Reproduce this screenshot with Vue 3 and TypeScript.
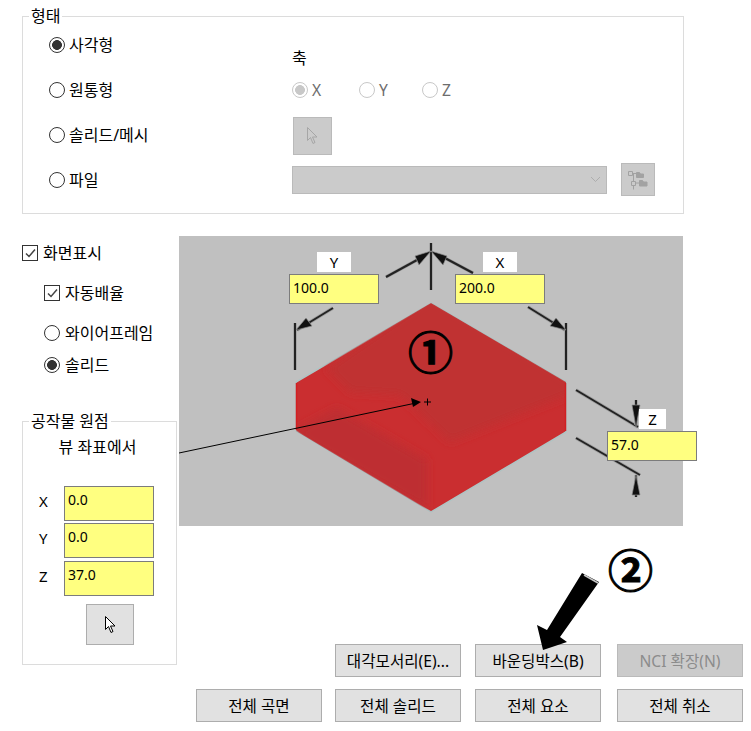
<script setup lang="ts">
const shapes = [
  { label: "원통형", row: 2 },
  { label: "솔리드/메시", row: 3 },
  { label: "파일", row: 4 },
];
const axes = [
  { label: "X", checked: true },
  { label: "Y", checked: false },
  { label: "Z", checked: false },
];
const origin = [
  { label: "X", value: "0.0" },
  { label: "Y", value: "0.0" },
  { label: "Z", value: "37.0" },
];
// 치수선: [x1, y1, x2, y2]
const dimLines = [
  [295, 323, 295, 370],
  [297, 330, 333, 308],
  [386, 277, 417, 260],
  [431, 243, 431, 290],
  [443, 257, 473, 273],
  [528, 307, 565, 330],
  [566, 323, 566, 370],
  [576, 390, 638, 427],
  [576, 438, 640, 475],
  [636, 400, 636, 425],
  [636, 475, 636, 497],
];
const dimHeads = [
  "296,330 306,318 312,326",
  "431,251 415,256 419,265",
  "431,251 447,256 443,265",
  "566,330 556,318 550,326",
  "636,427 632,405 640,405",
  "636,475 632,495 640,495",
];
</script>

<template>
  <div class="page">
    <section class="group shape_group">
      <span class="legend">형태</span>
      <div class="shape_grid">
        <label class="option" style="grid-area: 1 / 1">
          <input class="radio" type="radio" name="shape" checked />사각형
        </label>
        <div class="axis_title">축</div>
        <label v-for="s in shapes" :key="s.label" class="option" :style="{ gridArea: s.row + ' / 1' }">
          <input class="radio" type="radio" name="shape" />{{ s.label }}
        </label>
        <div class="axes">
          <label v-for="a in axes" :key="a.label" class="option disabled">
            <input class="radio" type="radio" name="axis" :checked="a.checked" disabled />{{ a.label }}
          </label>
        </div>
        <div class="pick_cell">
          <button class="off_btn pick" disabled>
            <svg width="11" height="17" viewBox="0 0 11 17">
              <path d="M.5.5v13l3-3 2.5 6 2-1-2.5-5.500h4.500z" fill="#cbcbcb" stroke="#a6a6a6" />
            </svg>
          </button>
        </div>
        <div class="file_cell">
          <div class="select">
            <svg width="11" height="7" viewBox="0 0 11 7">
              <path d="M1 1l4.500 4.500L10 1" fill="none" stroke="#adadad" />
            </svg>
          </div>
          <button class="off_btn tree" disabled>
            <svg width="20" height="20" viewBox="0 0 20 20" fill="none" stroke="#a2a2a2">
              <path d="M.5 1.500h4v4h-4zM4.500 3.500h3.500M5.500 3.500v16M7.500 13h3.500" />
              <path d="M3.500 11.500h4v4h-4z" fill="#cbcbcb" />
              <path d="M8.500 2.500h3l1 1.500h3v3.500h-7zM11.500 10.500h3l1 1.500h3.500v4h-7.500z" fill="#a2a2a2" />
            </svg>
          </button>
        </div>
      </div>
    </section>

    <div class="middle">
      <aside class="left">
        <label class="option display">
          <span class="check"><svg width="13" height="13" viewBox="0 0 13 13"><path d="M2 6.500l3 3 6-7" fill="none" stroke="#444" stroke-width="1.500" /></svg></span>화면표시
        </label>
        <label class="option auto">
          <span class="check"><svg width="13" height="13" viewBox="0 0 13 13"><path d="M2 6.500l3 3 6-7" fill="none" stroke="#444" stroke-width="1.500" /></svg></span>자동배율
        </label>
        <label class="option wire">
          <input class="radio" type="radio" name="view" />와이어프레임
        </label>
        <label class="option solid">
          <input class="radio" type="radio" name="view" checked />솔리드
        </label>

        <section class="group origin_group">
          <span class="legend">공작물 원점</span>
          <div class="origin_title">뷰 좌표에서</div>
          <div class="origin_rows">
            <div v-for="o in origin" :key="o.label" class="origin_row">
              <span class="origin_label">{{ o.label }}</span>
              <input class="num origin_num" :value="o.value" readonly />
            </div>
          </div>
          <button class="btn origin_pick">
            <svg width="11" height="17" viewBox="0 0 11 17">
              <path d="M.5.5v13l3-3 2.5 6 2-1-2.5-5.500h4.500z" fill="#fff" stroke="#000" />
            </svg>
          </button>
        </section>
      </aside>

      <div class="right">
        <div class="viewport">
          <svg class="scene" width="504" height="290" viewBox="179 236 504 290">
            <defs>
              <clipPath id="box">
                <polygon points="431,303 566,382 566,432 431,512 296,431 296,382" />
              </clipPath>
              <filter id="soft">
                <feGaussianBlur stdDeviation="4" />
              </filter>
            </defs>
            <polygon points="431,303 566,382 566,432 431,512 296,431 296,382" fill="#ca2e30" stroke="#afc4c4" stroke-width="1.500" />
            <g clip-path="url(#box)">
              <polygon points="431,296 574,382 574,393 450,442 400,395 350,392 326,368" fill="#c03032" filter="url(#soft)" />
              <polygon points="290,433 337,408 427,460 427,510" fill="#be2f31" filter="url(#soft)" />
            </g>
            <path d="M296.500 383v47M565.500 383v48" stroke="#d21f22" stroke-width="1.500" />
            <g v-for="(l, i) in dimLines" :key="i">
              <line :x1="l[0]" :y1="l[1]" :x2="l[2]" :y2="l[3]" stroke="#a0a0a0" stroke-width="3.500" />
              <line :x1="l[0]" :y1="l[1]" :x2="l[2]" :y2="l[3]" stroke="#222" stroke-width="2" />
            </g>
            <polygon v-for="(h, i) in dimHeads" :key="i" :points="h" fill="#111" stroke="#8e8e8e" stroke-width=".7" />
            <line x1="179" y1="453" x2="416" y2="403" stroke="#000" />
            <polygon points="421,402 411,398 413,407" fill="#000" />
            <path d="M424 402h7M427.500 398.500v7" stroke="#000" />
          </svg>
          <span class="dim_label y_label">Y</span>
          <span class="dim_label x_label">X</span>
          <span class="dim_label z_label">Z</span>
          <input class="num dim_num y_num" value="100.0" readonly />
          <input class="num dim_num x_num" value="200.0" readonly />
          <input class="num dim_num z_num" value="57.0" readonly />
          <span class="mark mark_one">①</span>
        </div>

        <div class="buttons">
          <button class="btn" style="grid-column: 2">대각모서리(E)...</button>
          <button class="btn">바운딩박스(B)</button>
          <button class="btn off" disabled>NCI 확장(N)</button>
          <button class="btn">전체 곡면</button>
          <button class="btn">전체 솔리드</button>
          <button class="btn">전체 요소</button>
          <button class="btn">전체 취소</button>

          <span class="mark mark_two">②</span>
          <svg class="big_arrow" width="70" height="85" viewBox="535 570 70 85">
            <polygon points="582,573 599,582 560,637 567,642 543,650 537,625 547,630" fill="#000" />
            <path d="M584 575l14 8" stroke="#c8c8c8" stroke-width="1.500" />
          </svg>
        </div>
      </div>
    </div>
  </div>
</template>

<style>
html,
body {
  margin: 0;
  background: #fff;
}
</style>

<style scoped>
.page {
  width: 751px;
  height: 731px;
  box-sizing: border-box;
  padding: 16px 0 0 22px;
  overflow: hidden;
  font-family: "Noto Sans", "Noto Sans CJK KR", sans-serif;
  font-size: 16px;
  line-height: 20px;
  color: #000;
}

.group {
  position: relative;
  box-sizing: border-box;
  border: 1px solid #dcdcdc;
}

.legend {
  position: absolute;
  left: 6px;
  top: -11px;
  padding: 0 2px;
  background: #fff;
}

.shape_group {
  width: 662px;
  height: 198px;
  padding: 5px 0 0 26px;
}

.shape_grid {
  display: grid;
  grid-template-columns: 243px 1fr;
  grid-auto-rows: 45px;
}

.option {
  display: flex;
  align-items: center;
  gap: 4px;
  white-space: nowrap;
}

.disabled {
  color: #6d6d6d;
  font-size: 15.600px;
}

.radio {
  appearance: none;
  flex: none;
  box-sizing: border-box;
  width: 16px;
  height: 16px;
  margin: 0;
  border: 1px solid #333;
  border-radius: 50%;
  background: #fff;
}

.radio:checked {
  background: radial-gradient(circle, #333 0 4.600px, #fff 5.200px);
}

.radio:disabled {
  border-color: #c8c8c8;
}

.radio:disabled:checked {
  background: radial-gradient(circle, #c8c8c8 0 4.600px, #fff 5.200px);
}

.check {
  display: flex;
  align-items: center;
  justify-content: center;
  flex: none;
  box-sizing: border-box;
  width: 16px;
  height: 16px;
  border: 1px solid #333;
  background: #fff;
}

.axis_title {
  grid-area: 1 / 2;
  align-self: center;
  padding-top: 26px;
}

.axes {
  grid-area: 2 / 2;
  display: grid;
  grid-template-columns: 67px 63px 1fr;
  align-items: center;
}

.pick_cell {
  grid-area: 3 / 2;
  display: flex;
  align-items: center;
  padding: 2px 0 0 1px;
}

.file_cell {
  grid-area: 4 / 2;
  display: flex;
  align-items: center;
  gap: 14px;
}

.off_btn {
  display: flex;
  align-items: center;
  justify-content: center;
  box-sizing: border-box;
  padding: 0;
  border: 1px solid #bababa;
  background: #cbcbcb;
}

.pick {
  width: 39px;
  height: 38px;
}

.tree {
  width: 34px;
  height: 33px;
}

.select {
  display: flex;
  align-items: center;
  justify-content: flex-end;
  box-sizing: border-box;
  width: 315px;
  height: 28px;
  padding-right: 5px;
  border: 1px solid #bababa;
  background: #cbcbcb;
}

.middle {
  display: grid;
  grid-template-columns: 157px 1fr;
  margin-top: 22px;
}

.left {
  display: flex;
  flex-direction: column;
  align-items: flex-start;
}

.display {
  margin-top: 7px;
  gap: 5px;
}

.auto {
  margin: 20px 0 0 22px;
  gap: 5px;
}

.wire {
  margin: 20px 0 0 22px;
  gap: 5px;
}

.solid {
  margin: 12px 0 0 22px;
  gap: 5px;
}

.origin_group {
  width: 155px;
  height: 244px;
  margin-top: 46px;
}

.origin_title {
  margin-top: 15px;
  text-align: center;
  padding-right: 4px;
}

.origin_rows {
  margin: 29px 0 0 15px;
  display: flex;
  flex-direction: column;
  gap: 2px;
}

.origin_row {
  display: flex;
  align-items: center;
}

.origin_row:last-child {
  margin-top: 1px;
}

.origin_label {
  width: 26px;
  margin-bottom: 5px;
  padding-left: 1px;
  box-sizing: border-box;
  font-size: 15px;
}

.num {
  box-sizing: border-box;
  padding: 0 0 0 3px;
  border: 1px solid #7c7c7c;
  outline: none;
  background: #ffff80;
  font: inherit;
  font-size: 14px;
  color: #000;
}

.origin_num {
  width: 90px;
  height: 35px;
  padding-bottom: 9px;
}

.btn {
  display: block;
  box-sizing: border-box;
  width: 126px;
  height: 33px;
  padding: 0;
  border: 1px solid #adadad;
  background: #e1e1e1;
  font: inherit;
  font-size: 15.600px;
  color: #000;
  white-space: nowrap;
}

.btn.off {
  background: #cbcbcb;
  border-color: #bababa;
  color: #8c8c8c;
}

.origin_pick {
  display: flex;
  align-items: center;
  justify-content: center;
  width: 48px;
  height: 41px;
  margin: 8px 0 0 63px;
}

.right {
  position: relative;
}

.viewport {
  position: relative;
  width: 504px;
  height: 290px;
  background: #c0c0c0;
}

.scene {
  display: block;
}

.dim_label {
  position: absolute;
  box-sizing: border-box;
  width: 34px;
  height: 20px;
  background: #fff;
  text-align: center;
  font-size: 15px;
}

.y_label {
  left: 138px;
  top: 16px;
}

.x_label {
  left: 304px;
  top: 16px;
}

.z_label {
  left: 460px;
  top: 173px;
  width: 27px;
}

.dim_num {
  position: absolute;
  width: 90px;
  height: 30px;
  padding-bottom: 3px;
}

.y_num {
  left: 110px;
  top: 38px;
}

.x_num {
  left: 276px;
  top: 38px;
}

.z_num {
  left: 428px;
  top: 195px;
}

.mark {
  position: absolute;
  font-family: "Noto Sans CJK KR", sans-serif;
  font-weight: 700;
  font-size: 45px;
  line-height: 60px;
  color: #000;
  -webkit-text-stroke: 1px #000;
}

.mark_one {
  left: 229px;
  top: 85px;
}

.buttons {
  position: relative;
  display: grid;
  grid-template-columns: 139px 140px 142px 126px;
  grid-template-rows: 33px 33px;
  row-gap: 12px;
  margin: 118px 0 0 17px;
}

.mark_two {
  left: 412px;
  top: -105px;
}

.big_arrow {
  position: absolute;
  left: 339px;
  top: -74px;
}
</style>
